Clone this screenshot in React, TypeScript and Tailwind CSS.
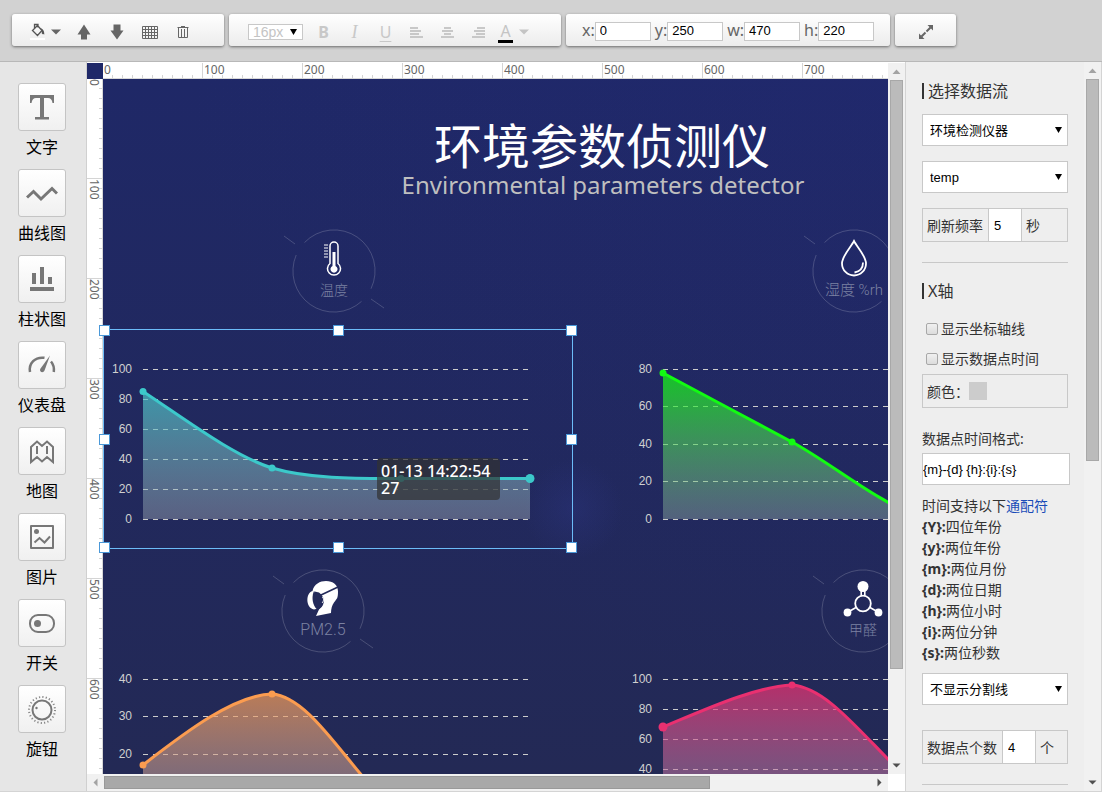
import type { ReactNode } from 'react';

const SANS = "font-['Noto_Sans','Noto_Sans_CJK_SC',sans-serif]";
const ARIAL = "font-['Liberation_Sans','Noto_Sans_CJK_SC',sans-serif]";

/* ---------- toolbar ---------- */

function Panel({ className = '', children }: { className?: string; children: ReactNode }) {
  return (
    <div
      className={`flex h-8 shrink-0 items-center rounded-[3px] bg-linear-to-b from-white to-[#ececec] shadow-[0_1px_3px_rgba(0,0,0,0.5)] ${className}`}
    >
      {children}
    </div>
  );
}

function Caret({ color }: { color: string }) {
  return (
    <svg width="10" height="6" viewBox="0 0 10 6" fill={color} aria-hidden="true">
      <path d="M0 0.5h10L5 5.5z" />
    </svg>
  );
}

function AlignIcon({ rows }: { rows: [number, number][] }) {
  return (
    <svg width="13" height="11" viewBox="0 0 13 11" fill="#c8c8c8" aria-hidden="true">
      {rows.map(([x, w], i) => (
        <rect key={i} x={x} y={i * 3} width={w} height="2" />
      ))}
    </svg>
  );
}

function ToolButton({ label, className, children }: { label: string; className: string; children: ReactNode }) {
  return (
    <button type="button" aria-label={label} className={`flex h-full items-center justify-center ${className}`}>
      {children}
    </button>
  );
}

function Toolbar() {
  const fields: [string, string][] = [
    ['x', '0'],
    ['y', '250'],
    ['w', '470'],
    ['h', '220'],
  ];
  return (
    <header className="flex h-[62px] shrink-0 gap-[5px] border-b border-[#b8b8b8] bg-[#d2d2d2] px-3 pt-[14px]">
      <Panel className="w-[212px] pl-[18px]">
        <ToolButton label="填充颜色" className="w-[37px] gap-[5px] pr-[6px] pt-1">
          <svg width="16" height="18" viewBox="0 0 16 18" aria-hidden="true">
            <path d="M7.500 2.500L2.500 7.500l5 5 4.500-5-4.500-5zM4.500 5.500v-4h3.500v3" fill="none" stroke="#555" strokeWidth="1.300" />
            <path d="M10 5c2.600.5 4.400 2.400 4.300 6.400-1.200 0-2-.4-2.600-1.200l.3-2.700z" fill="#555" />
            <rect x="0" y="15" width="15" height="2" fill="#fff" />
          </svg>
          <Caret color="#666" />
        </ToolButton>
        <ToolButton label="上移" className="w-[33px] pt-1">
          <svg width="14" height="16" viewBox="0 0 14 16" fill="#666" aria-hidden="true">
            <path d="M7 0.500l6.500 10H10V15.500H4V10.500H0.500z" />
          </svg>
        </ToolButton>
        <ToolButton label="下移" className="w-[33px] pt-1">
          <svg width="14" height="16" viewBox="0 0 14 16" fill="#666" aria-hidden="true">
            <path d="M7 15.500l6.500-9H10.500V0.500H3.500V6.500H0.500z" />
          </svg>
        </ToolButton>
        <ToolButton label="网格" className="w-[33px] pt-1">
          <svg width="16" height="13" viewBox="0 0 16 13" fill="none" stroke="#666" aria-hidden="true">
            <path d="M0.500 0.500h15v12h-15zM0 3.500h16M0 6.500h16M0 9.500h16M3.500 0v13M6.500 0v13M9.500 0v13M12.500 0v13" />
          </svg>
        </ToolButton>
        <ToolButton label="删除" className="w-[33px] pt-1">
          <svg width="12" height="12" viewBox="0 0 12 12" fill="none" stroke="#666" aria-hidden="true">
            <path d="M0.500 1.500h11M4 0.500h4M1.500 2v9.500h9V2M4.500 3v8M7.500 3v8" />
          </svg>
        </ToolButton>
      </Panel>

      <Panel className="w-[332px] pl-[19px]">
        <span className="relative mr-[5px] mt-1 block">
          <select
            aria-label="字号"
            className={`block h-4 w-[55px] appearance-none border border-[#c8c8c8] bg-white pl-1 text-sm leading-[14px] text-[#c4c4c4] ${ARIAL}`}
          >
            <option>16px</option>
          </select>
          <svg className="pointer-events-none absolute right-[6px] top-[5px]" width="7" height="6" viewBox="0 0 7 6" aria-hidden="true">
            <path d="M0 0h7L3.500 6z" />
          </svg>
        </span>
        <ToolButton label="粗体" className="w-[31px] pt-1 text-base font-bold text-[#c8c8c8]">B</ToolButton>
        <ToolButton label="斜体" className="w-[31px] pt-1 font-['Liberation_Serif',serif] text-lg italic text-[#c8c8c8]">I</ToolButton>
        <ToolButton label="下划线" className="w-[31px] pt-1 text-base text-[#c8c8c8] underline underline-offset-3">U</ToolButton>
        <ToolButton label="左对齐" className="w-[31px] pt-1">
          <AlignIcon rows={[[0, 8], [0, 11], [0, 9], [0, 13]]} />
        </ToolButton>
        <ToolButton label="居中" className="w-[31px] pt-1">
          <AlignIcon rows={[[3, 7], [1, 11], [3, 7], [0, 13]]} />
        </ToolButton>
        <ToolButton label="右对齐" className="w-[31px] pt-1">
          <AlignIcon rows={[[5, 8], [2, 11], [4, 9], [0, 13]]} />
        </ToolButton>
        <ToolButton label="文字颜色" className="gap-[6px] pl-1 pt-1">
          <span className="block h-[21px] w-[15px] border-b-3 border-black text-center text-base leading-[18px] text-[#c4c4c4]">
            A
          </span>
          <Caret color="#c4c4c4" />
        </ToolButton>
      </Panel>

      <Panel className="w-[324px] gap-1 pl-4">
        {fields.map(([name, value]) => (
          <label key={name} className="flex items-center text-base text-[#666]">
            {name}:
            <input
              defaultValue={value}
              className={`mt-[2px] h-[19px] w-14 border border-[#c8c8c8] bg-white px-1 text-[13px] text-black ${ARIAL}`}
            />
          </label>
        ))}
      </Panel>

      <Panel className="w-[61px] justify-center">
        <ToolButton label="全屏" className="w-full pt-1">
          <svg width="14" height="14" viewBox="0 0 14 14" aria-hidden="true">
            <path d="M2.500 11.500l4-4M7.500 6.500l4-4" stroke="#666" strokeWidth="2" />
            <path d="M8.500 0H14v5.500zM0 8.500V14h5.500z" fill="#666" />
          </svg>
        </ToolButton>
      </Panel>
    </header>
  );
}

/* ---------- component palette ---------- */

const TOOLS: { label: string; icon: ReactNode }[] = [
  {
    label: '文字',
    icon: <path d="M4 4h24v8h-1.500C26 8.500 24.500 7 22 7h-4v19h5v2.500H9V26h5V7h-4C7.500 7 6 8.500 5.500 12H4z" fill="#777" />,
  },
  {
    label: '曲线图',
    icon: <path d="M1 20.500l6.500-6L15 22l11-10.500 5 5" fill="none" stroke="#777" strokeWidth="3" />,
  },
  {
    label: '柱状图',
    icon: <path d="M6 10h4v11H6zM14 4h4v17h-4zM22 14h4v7h-4zM4 24h24v4H4z" fill="#777" />,
  },
  {
    label: '仪表盘',
    icon: (
      <>
        <path d="M4 23C2.500 14.500 9 7.500 18.500 8.800" fill="none" stroke="#777" strokeWidth="2.500" />
        <path d="M25 12.500c2.500 3 3.300 6.500 2.800 10.500" fill="none" stroke="#777" strokeWidth="2.500" />
        <path d="M24 6.500L18.500 21.500c-1.200 3-5.500 1.500-4.300-1.500z" fill="#777" />
      </>
    ),
  },
  {
    label: '地图',
    icon: (
      <path
        d="M5 12l6-5.500 5 4.500 5-4.500 6 5.500v15l-6-5-5 4.500-5-4.500-6 5zM11 11v8M21 11v8"
        fill="none"
        stroke="#777"
        strokeWidth="2"
      />
    ),
  },
  {
    label: '图片',
    icon: (
      <>
        <path d="M5 5h22v22H5z" fill="none" stroke="#777" strokeWidth="2" strokeLinejoin="round" />
        <circle cx="10.500" cy="10.500" r="2.500" fill="#777" />
        <path d="M8.500 21.500l5-4.500 5 4.500 5.500-6" fill="none" stroke="#777" strokeWidth="2" />
      </>
    ),
  },
  {
    label: '开关',
    icon: (
      <>
        <rect x="4" y="8" width="24" height="17" rx="8" fill="none" stroke="#777" strokeWidth="2" />
        <circle cx="11.500" cy="16.500" r="3.500" fill="#777" />
      </>
    ),
  },
  {
    label: '旋钮',
    icon: (
      <>
        <circle cx="16" cy="17" r="9.500" fill="none" stroke="#777" strokeWidth="2" />
        <circle cx="16" cy="17" r="13" fill="none" stroke="#888" strokeWidth="2" strokeDasharray="1.200 2.200" />
        <circle cx="10.500" cy="15" r="1.200" fill="#777" />
      </>
    ),
  },
];

function Palette() {
  return (
    <nav className="w-[87px] shrink-0 overflow-hidden border-r border-[#d0d0d0] bg-[#e6e6e6] pt-[21px]">
      {TOOLS.map((tool) => (
        <button key={tool.label} type="button" className="mb-[10px] flex w-[84px] flex-col items-center gap-1">
          <span className="flex size-12 items-center justify-center rounded-[3px] border border-[#c4c4c4] bg-linear-to-b from-white to-[#f0f0f0]">
            <svg width="32" height="32" viewBox="0 0 32 32" aria-hidden="true">
              {tool.icon}
            </svg>
          </span>
          <span className="h-6 text-base leading-6 text-black">{tool.label}</span>
        </button>
      ))}
    </nav>
  );
}

/* ---------- rulers and scrollbars ---------- */

const MARKS = [0, 100, 200, 300, 400, 500, 600, 700, 800, 900];

function HorizontalRuler() {
  return (
    <div className="flex h-4 min-w-0 flex-1 overflow-x-clip border-b border-[#d8d8d8] bg-white">
      {MARKS.map((m) => (
        <span
          key={m}
          className="w-[100px] shrink-0 bg-[repeating-linear-gradient(to_right,transparent_0_9px,#d4d4d4_9px_10px)] bg-[length:100%_3px] bg-bottom bg-no-repeat text-xs leading-[13px] text-[#666]"
        >
          <span className="block h-full border-r border-[#d4d4d4] pl-[1px]">{m}</span>
        </span>
      ))}
    </div>
  );
}

function VerticalRuler() {
  return (
    <div className="flex w-4 shrink-0 flex-col overflow-y-clip border-r border-[#d8d8d8] bg-white">
      {MARKS.map((m) => (
        <span
          key={m}
          className="h-[100px] shrink-0 bg-[repeating-linear-gradient(to_bottom,transparent_0_9px,#d4d4d4_9px_10px)] bg-[length:3px_100%] bg-right bg-no-repeat text-xs leading-[15px] text-[#666]"
        >
          <span className="block size-full border-b border-[#d4d4d4] [writing-mode:vertical-rl]">{m}</span>
        </span>
      ))}
    </div>
  );
}

function Arrow({ d, color }: { d: string; color: string }) {
  return (
    <svg className="shrink-0" width="17" height="17" viewBox="0 0 17 17" fill={color} aria-hidden="true">
      <path d={d} />
    </svg>
  );
}

function VerticalScrollbar({ thumb }: { thumb: string }) {
  return (
    <div className="flex w-[17px] shrink-0 flex-col bg-[#f1f1f1]">
      <Arrow d="M4.500 11L8.500 6.500l4 4.500z" color="#a3a3a3" />
      <div className="min-h-0 flex-1 px-[2px]">
        <div className={`border border-[#a8a8a8] bg-[#bbb] ${thumb}`} />
      </div>
      <Arrow d="M4.500 6.500h8l-4 4z" color="#505050" />
    </div>
  );
}

/* ---------- canvas items ---------- */

type ChartProps = {
  id: string;
  color: string;
  fade: string;
  curve: string;
  labels: number[];
  dots: [number, number, number][];
};

function Chart({ id, color, fade, curve, labels, dots }: ChartProps) {
  const step = 150 / (labels.length - 1);
  return (
    <svg width="470" height="220" viewBox="0 0 470 220" className="block">
      <defs>
        <linearGradient id={id} gradientUnits="userSpaceOnUse" x1="0" y1="44" x2="0" y2="190">
          <stop offset="0" stopColor={color} stopOpacity="0.740" />
          <stop offset="1" stopColor={fade} stopOpacity="0.420" />
        </linearGradient>
      </defs>
      {labels.map((value, i) => (
        <g key={value}>
          <path d={`M40 ${Math.floor(40 + i * step)}.500H426`} stroke="#ccc" strokeDasharray="5 5" />
          <text x="29" y={Math.floor(44 + i * step)} textAnchor="end" fill="#d0d0d0" fontSize="12" fontFamily="Liberation Sans, sans-serif">
            {value}
          </text>
        </g>
      ))}
      <path d={`${curve}V190H40z`} fill={`url(#${id})`} />
      <path d={curve} fill="none" stroke={color} strokeWidth="3" />
      {dots.map(([x, y, r]) => (
        <circle key={x} cx={x} cy={y} r={r} fill={color} />
      ))}
    </svg>
  );
}

function Badge({ label, className, children }: { label: string; className: string; children: ReactNode }) {
  return (
    <div className={`absolute h-[84px] w-[104px] ${className}`}>
      <svg width="104" height="84" viewBox="-52 -42 104 84" aria-hidden="true">
        <g fill="none" stroke="#fff" strokeOpacity="0.180">
          <path d="M-29.500 -28.500A41 41 0 0 1 37 17.700M27.500 30.400A41 41 0 0 1 -37.800 -16" />
          <path d="M-50 -35l11 8M37 28l13 9" />
        </g>
        {children}
      </svg>
      <span className="absolute inset-x-0 top-[51px] text-center font-['Roboto','Noto_Sans_CJK_SC',sans-serif] font-light leading-5 text-[#7c82a2]">
        {label}
      </span>
    </div>
  );
}

function Handle({ className }: { className: string }) {
  return <span className={`absolute size-[11px] border border-[#4a98d8] bg-white ${className}`} />;
}

function Canvas() {
  return (
    <div className="relative min-h-0 min-w-0 flex-1">
      <div className="absolute inset-0 overflow-hidden bg-[radial-gradient(circle_at_470px_430px,rgba(50,60,150,0.250),transparent_50px),radial-gradient(ellipse_at_100%_0%,rgba(35,42,125,0.250),transparent_700px),linear-gradient(to_bottom,#1f2867,#232955)]">
        <h1 className="absolute left-0 top-[28px] w-[998px] text-center font-['Noto_Sans_CJK_SC',sans-serif] text-5xl leading-[72px] text-white">
          环境参数侦测仪
        </h1>
        <p className="absolute left-0 top-[90px] w-[1000px] text-center text-2xl leading-8 text-[#bfbfbf]">
          Environmental parameters detector
        </p>

        <Badge label="温度" className="left-[179px] top-[150px] text-sm">
          <g fill="none" stroke="#fff" strokeWidth="1.500">
            <path d="M-4 -7.500V-25a4 4 0 0 1 8 0v17.500a6.500 6.500 0 1 1 -8 0z" />
            <path d="M-10 -26h4M-10 -23h4M-10 -20h4M-10 -17h4M-10 -14h4" strokeWidth="1" />
          </g>
          <path d="M-1.500 -19h3v14a3.500 3.500 0 1 1 -3 0z" fill="#fff" />
        </Badge>
        <Badge label="湿度 %rh" className="left-[699px] top-[150px] text-[15px]">
          <g fill="none" stroke="#fff" strokeWidth="1.800">
            <path d="M0 -30C-3 -24 -12 -15 -12 -7.500a12 12 0 0 0 24 0C12 -15 3 -24 0 -30z" />
            <path d="M9 -8.500C9 -3 6 0.500 0.500 1.500" />
          </g>
        </Badge>
        <Badge label="PM2.5" className="left-[168px] top-[490px] text-base">
          <path d="M-10.500 -20C-9 -27 -3 -30 3 -30c7 0 12 4 12 10.500 0 7-1 7-4 11-2 3-3 6-3 10.500L-7 5l3-6.500c6-5 6-13 0-17z" fill="#fff" />
          <path d="M-10.500 -20c-7 2-7 17 1.500 18.500l4 -1c-4-5-4.500-11-3.500-17z" fill="#fff" />
          <path d="M-9.500 -19c-2 6-1 13 3.500 17.500C-1 -2.500 2 -7 0 -13.500L-3 -17z" fill="#232a5a" />
          <path d="M-2 -16L15 -24" stroke="#232a5a" strokeWidth="1.500" />
          <path d="M-1 -14c2 1 2 4 0 6" fill="none" stroke="#fff" strokeWidth="1" />
        </Badge>
        <Badge label="甲醛" className="left-[708px] top-[490px] text-sm">
          <g stroke="#fff" fill="none">
            <circle cx="0" cy="-7.500" r="7.800" strokeWidth="1.800" />
            <path d="M-1.800 -22v7M1.800 -22v7M-7 -3.500l-7 4M7 -3.500l7 4" strokeWidth="1.600" />
          </g>
          <g fill="#fff">
            <circle cx="0" cy="-24.500" r="5.500" />
            <circle cx="-15.500" cy="1.500" r="3.900" />
            <circle cx="15.500" cy="1.500" r="3.900" />
          </g>
        </Badge>

        <div className="absolute left-0 top-[250px]">
          <Chart
            id="temp"
            color="#3cc8ca"
            fade="#a5aeb8"
            labels={[100, 80, 60, 40, 20, 0]}
            curve="M40 62.500C79 88 130 127 169 139C208 150.500 259 149.500 298 149.500H427"
            dots={[[40, 62.5, 3.5], [169, 139, 3.5], [298, 149.5, 3.5], [427, 149.5, 4.5]]}
          />
        </div>
        <div className="absolute left-[520px] top-[250px]">
          <Chart
            id="humidity"
            color="#12fb12"
            fade="#96b0a8"
            labels={[80, 60, 40, 20, 0]}
            curve="M40 44C79 65 130 92 169 113C208 134 255 174 298 188"
            dots={[[40, 44, 3.5], [169, 113, 3.5]]}
          />
        </div>
        <div className="absolute left-0 top-[560px]">
          <Chart
            id="pm"
            color="#fb9c50"
            fade="#b4a8c0"
            labels={[40, 30, 20, 10, 0]}
            curve="M40 126C79 96 130 56 169 55C208 58 243 126 292 173"
            dots={[[40, 126, 3.5], [169, 55, 3.5]]}
          />
        </div>
        <div className="absolute left-[520px] top-[560px]">
          <Chart
            id="hcho"
            color="#e93070"
            fade="#a8a0c0"
            labels={[100, 80, 60, 40, 20, 0]}
            curve="M40 88C79 72 130 48 169 46C208 49 245 105 296 150"
            dots={[[40, 88, 4.5], [169, 46, 3.5]]}
          />
        </div>

        <div className="absolute left-[274px] top-[379px] h-[42px] w-[123px] rounded bg-[rgba(50,50,50,0.700)] px-1 pt-[5px] text-base font-medium leading-[17px] text-white">
          01-13 14:22:54
          <br />
          27
        </div>
      </div>

      <div className="absolute left-0 top-[250px] h-[220px] w-[470px] border border-[#6cbcf8]">
        <Handle className="-left-[5px] -top-[5px]" />
        <Handle className="left-[229px] -top-[5px]" />
        <Handle className="-right-[5px] -top-[5px]" />
        <Handle className="-left-[5px] top-[104px]" />
        <Handle className="-right-[5px] top-[104px]" />
        <Handle className="-bottom-[5px] -left-[5px]" />
        <Handle className="-bottom-[5px] left-[229px]" />
        <Handle className="-bottom-[5px] -right-[5px]" />
      </div>
    </div>
  );
}

function Editor() {
  return (
    <main className="flex min-w-0 flex-1 flex-col pt-px">
      <div className="flex min-h-0 flex-1">
        <div className="flex min-w-0 flex-1 flex-col">
          <div className="flex">
            <div className="size-4 shrink-0 bg-[#1f2868]" />
            <HorizontalRuler />
          </div>
          <div className="flex min-h-0 flex-1">
            <VerticalRuler />
            <Canvas />
          </div>
        </div>
        <VerticalScrollbar thumb="h-[87%]" />
      </div>
      <div className="flex h-[17px] shrink-0">
        <div className="flex min-w-0 flex-1 bg-[#f1f1f1]">
          <Arrow d="M10.500 4.500L6.500 8.500l4 4z" color="#a3a3a3" />
          <div className="min-w-0 flex-1 py-[2px]">
            <div className="h-full w-[79%] border border-[#999] bg-[#a8a8a8]" />
          </div>
          <Arrow d="M6.500 4.500l4 4-4 4z" color="#505050" />
        </div>
        <div className="w-[17px] shrink-0 bg-white" />
      </div>
    </main>
  );
}

/* ---------- properties ---------- */

function SectionTitle({ children }: { children: ReactNode }) {
  return <h2 className="border-l-2 border-[#333] pl-1 text-base leading-4 text-[#333]">{children}</h2>;
}

function Dropdown({ label, value }: { label: string; value: string }) {
  return (
    <div className="relative">
      <select
        aria-label={label}
        className={`block h-8 w-full appearance-none border border-[#c8c8c8] bg-white px-[7px] text-[13px] text-black ${ARIAL}`}
      >
        <option>{value}</option>
      </select>
      <svg className="pointer-events-none absolute right-[6px] top-[13px]" width="7" height="6" viewBox="0 0 7 6" aria-hidden="true">
        <path d="M0 0h7L3.500 6z" />
      </svg>
    </div>
  );
}

function UnitField({ label, value, unit }: { label: string; value: string; unit: string }) {
  return (
    <label className="flex h-[34px] items-center border border-[#c8c8c8] pl-1">
      {label}
      <input
        defaultValue={value}
        className={`ml-[5px] mr-1 h-full w-[34px] border-x border-[#c8c8c8] bg-white px-[5px] text-[13px] text-black ${ARIAL}`}
      />
      {unit}
    </label>
  );
}

function CheckRow({ children }: { children: ReactNode }) {
  return (
    <label className="flex h-[30px] items-center gap-[3px] pl-1">
      <input
        type="checkbox"
        className="mt-[2px] size-3 appearance-none rounded-[2px] border border-[#a8a8a8] bg-linear-to-b from-[#f0f0f0] to-[#dcdcdc]"
      />
      {children}
    </label>
  );
}

const WILDCARDS: [string, string][] = [
  ['{Y}:', '四位年份'],
  ['{y}:', '两位年份'],
  ['{m}:', '两位月份'],
  ['{d}:', '两位日期'],
  ['{h}:', '两位小时'],
  ['{i}:', '两位分钟'],
  ['{s}:', '两位秒数'],
];

function Properties() {
  return (
    <aside className="flex w-[197px] shrink-0 border-x border-[#d4d4d4] bg-[#eee]">
      <div className="min-w-0 flex-1 overflow-hidden px-4 pt-[21px] text-sm leading-[21px] text-[#333]">
        <SectionTitle>选择数据流</SectionTitle>
        <div className="mt-[15px] flex flex-col gap-[15px]">
          <Dropdown label="设备" value="环境检测仪器" />
          <Dropdown label="数据流" value="temp" />
          <UnitField label="刷新频率" value="5" unit="秒" />
        </div>
        <hr className="my-5 border-[#c8c8c8]" />
        <SectionTitle>X轴</SectionTitle>
        <div className="mt-[14px]">
          <CheckRow>显示坐标轴线</CheckRow>
          <CheckRow>显示数据点时间</CheckRow>
          <div className="mt-px flex h-[34px] items-center border border-[#c8c8c8] pl-1">
            颜色：
            <button type="button" aria-label="颜色" className="size-[18px] bg-[#ccc]" />
          </div>
        </div>
        <label className="mt-5 block">
          数据点时间格式:
          <input
            defaultValue="{m}-{d} {h}:{i}:{s}"
            className={`mt-1 block h-8 w-[calc(100%+2px)] border border-[#c8c8c8] bg-white text-[13px] text-black ${ARIAL}`}
          />
        </label>
        <p className="mt-[10px]">
          时间支持以下
          <a href="#wildcards" className="text-[#1a4cb8]">
            通配符
          </a>
        </p>
        <ul id="wildcards" className="mb-[10px]">
          {WILDCARDS.map(([key, text]) => (
            <li key={key} className="h-[21px]">
              <b>{key}</b>
              {text}
            </li>
          ))}
        </ul>
        <Dropdown label="分割线" value="不显示分割线" />
        <div className="mt-[25px]">
          <UnitField label="数据点个数" value="4" unit="个" />
        </div>
        <hr className="mt-5 border-[#c8c8c8]" />
      </div>
      <VerticalScrollbar thumb="h-[55%]" />
    </aside>
  );
}

export default function App() {
  return (
    <div className={`flex h-screen flex-col overflow-hidden bg-white pr-[2px] pb-[5px] ${SANS}`}>
      <Toolbar />
      <div className="flex min-h-0 flex-1 border-b border-[#d4d4d4]">
        <Palette />
        <Editor />
        <Properties />
      </div>
    </div>
  );
}
